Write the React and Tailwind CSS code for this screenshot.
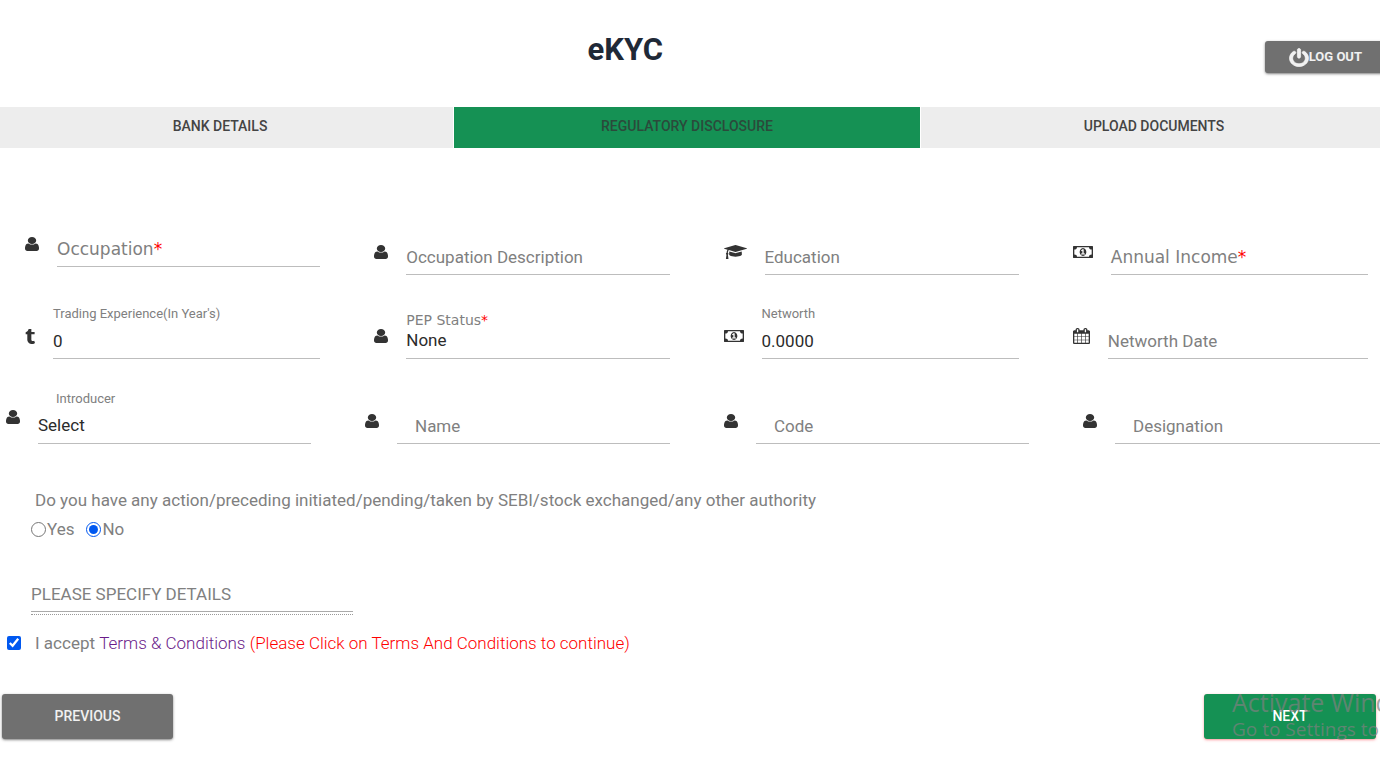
import { useState } from "react";
import { clsx } from "clsx";

const USER_PATH =
  "M1536 1399q0 109-62.5 187t-150.5 78h-854q-88 0-150.5-78t-62.5-187q0-85 8.5-160.5t31.5-152 58.5-131 94-89 134.5-34.5q131 128 313 128t313-128q76 0 134.5 34.5t94 89 58.5 131 31.5 152 8.5 160.5zm-256-887q0 159-112.5 271.5t-271.5 112.5-271.5-112.5-112.5-271.5 112.5-271.5 271.5-112.5 271.5 112.5 112.5 271.5z";
const CAP_PATH =
  "M1774 836l18 316q4 69-82 128t-235 93.5-323 34.5-323-34.5-235-93.5-82-128l18-316 574 181q22 7 48 7t48-7zm530-324q0 23-22 31l-1120 352q-4 1-10 1t-10-1l-652-206q-43 34-71 111.5t-34 178.5q63 36 63 109 0 69-58 107l58 433q2 14-8 25-9 11-24 11h-192q-15 0-24-11-10-11-8-25l58-433q-58-38-58-107 0-73 65-111 11-207 98-330l-333-104q-22-8-22-31t22-31l1120-352q4-1 10-1t10 1l1120 352q22 8 22 31z";
const MONEY_PATH =
  "M768 1152h384v-96h-128v-448h-114l-148 137 77 80q42-37 55-57h2v288h-128v96zm512-256q0 70-21 142t-59.5 134-101.5 101-138 39-138-39-101.5-101-59.5-134-21-142 21-142 59.5-134 101.5-101 138-39 138 39 101.5 101 59.5 134 21 142zm512 256v-512q-106 0-181-75t-75-181h-1152q0 106-75 181t-181 75v512q106 0 181 75t75 181h1152q0-106 75-181t181-75zm128-832v1152q0 26-19 45t-45 19h-1792q-26 0-45-19t-19-45v-1152q0-26 19-45t45-19h1792q26 0 45 19t19 45z";
const CALENDAR_PATH =
  "M192 1664h288v-288h-288v288zm352 0h320v-288h-320v288zm-352-352h288v-320h-288v320zm352 0h320v-320h-320v320zm-352-384h288v-288h-288v288zm736 736h320v-288h-320v288zm-384-736h320v-288h-320v288zm768 736h288v-288h-288v288zm-384-352h320v-320h-320v320zm-352-864v-288q0-13-9.5-22.5t-22.5-9.5h-64q-13 0-22.5 9.5t-9.5 22.5v288q0 13 9.5 22.5t22.5 9.5h64q13 0 22.5-9.5t9.5-22.5zm736 864h288v-320h-288v320zm-384-384h320v-288h-320v288zm384 0h288v-288h-288v288zm32-480v-288q0-13-9.5-22.5t-22.5-9.5h-64q-13 0-22.5 9.5t-9.5 22.5v288q0 13 9.5 22.5t22.5 9.5h64q13 0 22.5-9.5t9.5-22.5zm384-64v1280q0 52-38 90t-90 38h-1408q-52 0-90-38t-38-90v-1280q0-52 38-90t90-38h128v-96q0-66 47-113t113-47h64q66 0 113 47t47 113v96h384v-96q0-66 47-113t113-47h64q66 0 113 47t47 113v96h128q52 0 90 38t38 90z";
const TUMBLR_PATH =
  "M1328 1329l80 237q-23 35-111 66t-177 32q-104 2-190.5-26t-142.5-74-95-106-55.5-120-16.5-118v-544h-168v-215q72-26 129-69.5t91-90 58-102 34-99 15-88.5q1-5 4.5-8.5t7.5-3.5h244v424h333v252h-334v518q0 30 6.5 56t22.5 52.5 49.5 41.5 81.5 14q78-2 134-29z";
const POWER_PATH =
  "M1664 896q0 156-61 298t-164 245-245 164-298 61-298-61-245-164-164-245-61-298q0-182 80.5-343t226.5-270q43-32 95.5-25t83.5 50q32 42 24.5 94.5t-49.5 84.5q-98 74-151.5 181t-53.5 228q0 104 40.5 198.5t109.5 163.5 163.5 109.5 198.5 40.5 198.5-40.5 163.5-109.5 109.5-163.5 40.5-198.5q0-121-53.5-228t-151.5-181q-42-32-49.5-84.5t24.5-94.5q31-43 84-50t95 25q146 109 226.5 270t80.5 343zm-640-768v640q0 52-38 90t-90 38-90-38-38-90v-640q0-52 38-90t90-38 90 38 38 90z";

const icons = {
  user: { d: USER_PATH, viewBox: "256 128 1280 1536", size: "w-[14px] h-[14px]" },
  cap: { d: CAP_PATH, viewBox: "0 128 2304 1536", size: "w-[23px] h-[14px]" },
  money: { d: MONEY_PATH, viewBox: "0 256 1920 1280", size: "w-[20px] h-[12px]" },
  calendar: { d: CALENDAR_PATH, viewBox: "64 0 1664 1792", size: "w-[17px] h-[16px]" },
  tumblr: { d: TUMBLR_PATH, viewBox: "384 128 1024 1536", size: "w-[10px] h-[15px]" },
  power: { d: POWER_PATH, viewBox: "88 -40 1616 1744", size: "w-5 h-[19px]", strokeWidth: 60 },
};

function Icon({ name }) {
  const { d, viewBox, size, strokeWidth = 0 } = icons[name];
  return (
    <svg
      viewBox={viewBox}
      preserveAspectRatio="none"
      className={clsx("shrink-0", size)}
      fill="currentColor"
      stroke="currentColor"
      strokeWidth={strokeWidth}
      aria-hidden="true"
    >
      <path d={d} />
    </svg>
  );
}

function Field({ id, icon, label, value, options, required, indent, wide, className, iconClass = "h-9", labelClass }) {
  const [current, setCurrent] = useState(value ?? "");
  const filled = current !== "";

  const controlProps = {
    id,
    value: current,
    onChange: (e) => setCurrent(e.target.value),
    className: clsx(
      "row-start-2 col-start-1 w-full min-w-0 h-9 appearance-none rounded-none bg-transparent border-b border-[#bdbdbd] text-[17px] text-[#2b2b2b] focus:outline-none focus:border-[#159154]",
      indent && !options && "pl-[18px]",
    ),
  };

  return (
    <div className={clsx("flex items-end gap-[18px]", className)}>
      <span className={clsx("flex items-start text-[#333]", iconClass)}>
        <span className="h-[26px] flex items-center">
          <Icon name={icon} />
        </span>
      </span>
      <div className="flex-1 min-w-0 grid grid-cols-1">
        {/* Label sits on the line until the control has a value */}
        <label
          htmlFor={id}
          className={clsx(
            "col-start-1 text-[#808080] whitespace-nowrap pointer-events-none",
            filled ? "row-start-1 leading-[18px]" : "row-start-2 pt-px text-[17px] leading-[35px]",
            filled && (wide ? "text-[14px]" : "text-[13px]"),
            indent && "pl-[18px]",
            wide && "font-['DejaVu_Sans',sans-serif]",
            labelClass,
          )}
        >
          {label}
          {required && <span className="text-[#f00]">*</span>}
        </label>
        {options ? (
          <select {...controlProps}>
            {options.map((o) => (
              <option key={o} value={o}>{o}</option>
            ))}
          </select>
        ) : (
          <input type="text" {...controlProps} />
        )}
      </div>
    </div>
  );
}

const tabs = ["Bank Details", "Regulatory Disclosure", "Upload Documents"];

export default function App() {
  const [tab, setTab] = useState("Regulatory Disclosure");
  const [action, setAction] = useState("no");
  const [accepted, setAccepted] = useState(true);

  return (
    <div className="relative min-h-screen overflow-hidden bg-white font-[Roboto,sans-serif] text-[#333]">
      <header className="flex items-start h-[107px] -mr-[6px]">
        <h1 className="flex-1 pt-8 pr-[14px] text-center text-[31px] leading-9 font-bold text-[#1f2937]">eKYC</h1>
        <button className="mt-[41px] h-8 px-6 flex items-center rounded-[3px] bg-[#707070] text-[13px] font-bold text-white/90 shadow-sm shadow-black/40">
          <Icon name="power" />
          LOG OUT
        </button>
      </header>

      <nav className="flex gap-px -ml-[13px] -mr-[7px]">
        {tabs.map((t) => (
          <button
            key={t}
            onClick={() => setTab(t)}
            className={clsx(
              "flex-1 h-[41px] pb-[2px] uppercase text-[14px] font-medium",
              t === tab ? "bg-[#159154] text-[#2b4a3b]" : "bg-[#ededed] text-[#444]",
            )}
          >
            {t}
          </button>
        ))}
      </nav>

      <form onSubmit={(e) => e.preventDefault()}>
        <div className="grid grid-cols-4 items-end gap-x-[54px] gap-y-[30px] pt-[83px] pl-[25px] pr-3">
          <Field id="occupation" icon="user" label="Occupation" options={["", "Business", "Service"]} required wide className="pb-2" />
          <Field id="occupationDescription" icon="user" label="Occupation Description" />
          <Field id="education" icon="cap" label="Education" options={["", "Graduate", "Post Graduate"]} />
          <Field id="income" icon="money" label="Annual Income" options={["", "Below 1 Lac", "1-5 Lac"]} required wide />
          <Field id="experience" icon="tumblr" label="Trading Experience(In Year's)" value="0" />
          <Field id="pep" icon="user" label="PEP Status" value="None" options={["None", "PEP"]} required wide labelClass="-mb-[6px]" />
          <Field id="networth" icon="money" label="Networth" value="0.0000" />
          <Field id="networthDate" icon="calendar" label="Networth Date" />
        </div>

        <div className="grid grid-cols-4 items-end gap-x-[54px] pt-[31px] pl-[6px] -mr-2">
          <Field id="introducer" icon="user" label="Introducer" value="Select" options={["Select", "Employee"]} indent iconClass="h-10" />
          <Field id="name" icon="user" label="Name" indent />
          <Field id="code" icon="user" label="Code" indent />
          <Field id="designation" icon="user" label="Designation" indent />
        </div>

        <fieldset className="pt-11 pl-[31px] text-[17px] text-[#808080]">
          <legend className="contents">
            <span className="block pl-1 leading-6">
              Do you have any action/preceding initiated/pending/taken by SEBI/stock exchanged/any other authority
            </span>
          </legend>
          <div className="flex gap-3 pt-[3px] leading-7">
            <label className="flex items-center gap-px">
              <input type="radio" name="action" className="size-[15px] accent-[#0058f0]" checked={action === "yes"} onChange={() => setAction("yes")} />
              Yes
            </label>
            <label className="flex items-center gap-px">
              <input type="radio" name="action" className="size-[15px] accent-[#0058f0]" checked={action === "no"} onChange={() => setAction("no")} />
              No
            </label>
          </div>
          <div className="mt-[33px] w-[322px] pb-[2px] border-b border-dotted border-[#999]">
            <input
              type="text"
              aria-label="Please specify details"
              placeholder="PLEASE SPECIFY DETAILS"
              className="block w-full h-9 border-b border-[#aaa] placeholder:text-[#808080] focus:outline-none"
            />
          </div>
        </fieldset>

        <div className="flex items-center gap-[14px] pt-4 pl-[7px] text-[17px] leading-6 text-[#808080]">
          <input id="terms" type="checkbox" className="size-[14px] accent-[#0058f0]" checked={accepted} onChange={(e) => setAccepted(e.target.checked)} />
          <label htmlFor="terms">
            I accept{" "}
            <a href="#terms" className="font-light text-[#6a1b8a]">Terms &amp; Conditions</a>{" "}
            <span className="font-light text-[#f00]">(Please Click on Terms And Conditions to continue)</span>
          </label>
        </div>

        <div className="flex justify-between pt-[39px] pb-9 pl-[2px] pr-1">
          <button type="button" className="w-[171px] h-[45px] rounded-[3px] bg-[#707070] text-[14px] font-medium text-white/90 shadow-sm shadow-black/40">
            PREVIOUS
          </button>
          <div className="relative">
            <button type="submit" className="w-[172px] h-[45px] rounded-[3px] bg-[#159154] text-[14px] font-medium text-white shadow-sm shadow-red-500/40">
              NEXT
            </button>
            {/* OS activation notice over the corner */}
            <div className="absolute left-7 -top-[7px] whitespace-nowrap pointer-events-none font-['Open_Sans',sans-serif] text-[#808080]/70">
              <p className="text-[25px] leading-[30px]">Activate Windows</p>
              <p className="text-[19px] leading-6">Go to Settings to activate Windows.</p>
            </div>
          </div>
        </div>
      </form>
    </div>
  );
}
